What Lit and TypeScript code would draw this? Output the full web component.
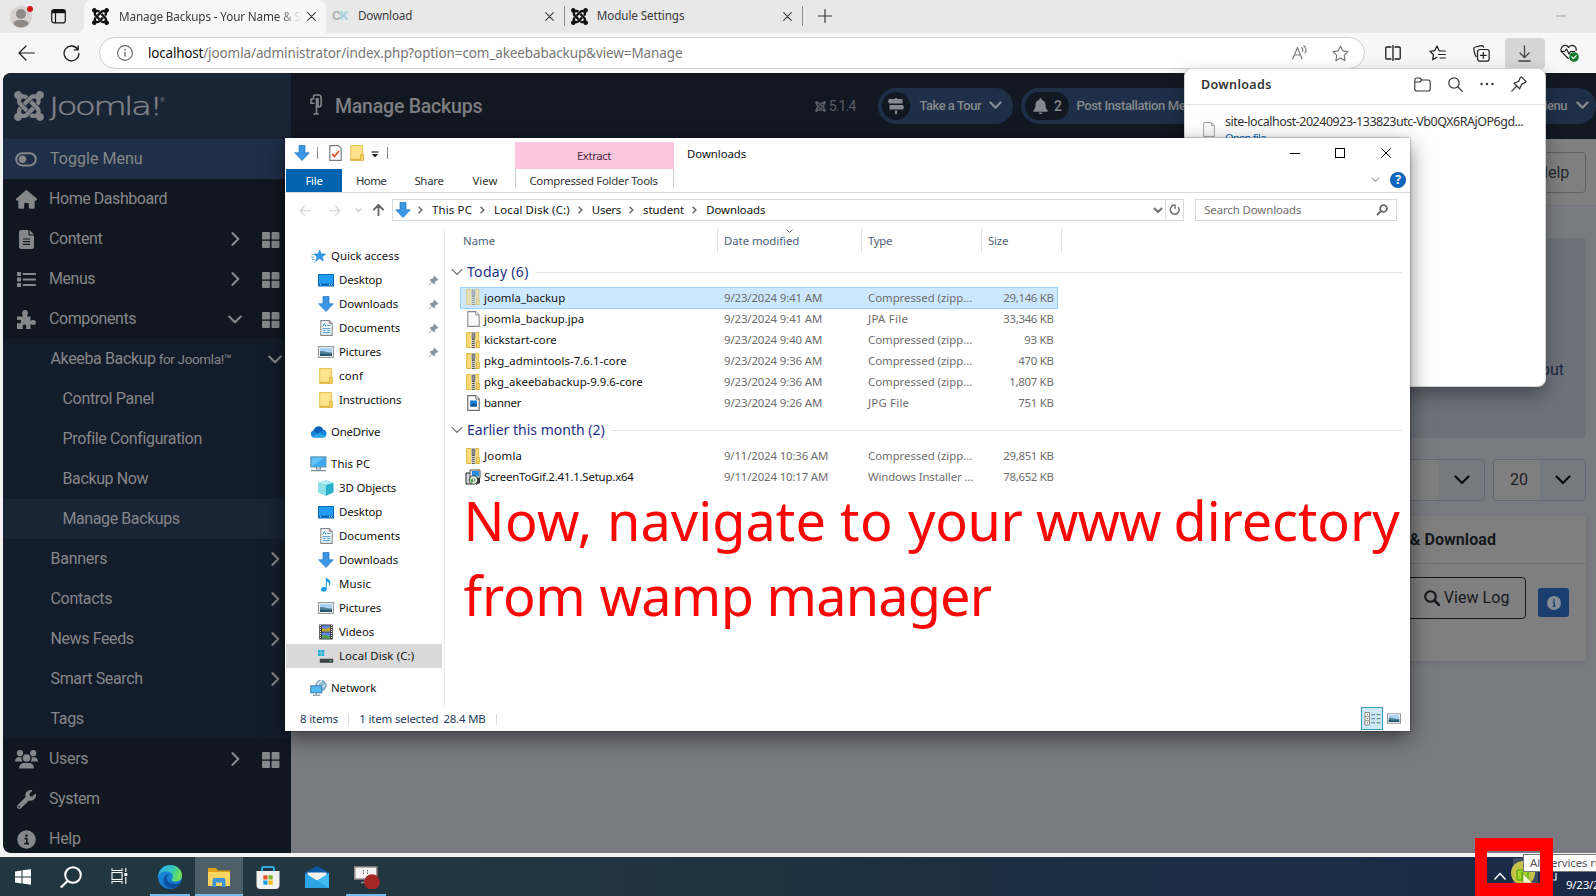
import { LitElement, html, svg, css, nothing } from "lit";
import { customElement, property } from "lit/decorators.js";

/* Text run whose letter spacing is tuned so that it fills a given width. */
@customElement("fit-text")
class FitText extends LitElement {
  @property() text = "";
  @property({ type: Number }) w = 0;
  static styles = css`
    :host { display: inline-block; white-space: pre; flex: none; }
  `;
  render() {
    return html`<span>${this.text}</span>`;
  }
  updated() {
    const span = this.renderRoot.querySelector("span") as HTMLElement;
    span.style.letterSpacing = "0px";
    const natural = span.getBoundingClientRect().width;
    if (this.w && natural) {
      span.style.letterSpacing = `${(this.w - 0.8 - natural) / this.text.length}px`;
    }
  }
}
const t = (text: string, w: number, cls = "") =>
  html`<fit-text class=${cls} .text=${text} .w=${w}></fit-text>`;

const icon = (w: number, h: number, vb: string, body: unknown, cls = "") =>
  html`<svg class="ic ${cls}" width=${w} height=${h} viewBox=${vb}>${body}</svg>`;

const line = (d: string, w = 1.2, color = "currentColor") =>
  svg`<path d=${d} fill="none" stroke=${color} stroke-width=${w} stroke-linecap="round" stroke-linejoin="round"/>`;

const joomlaPath = svg`<path fill="currentColor" d="M.6 92.1C.6 58.8 27.4 32 60.4 32c30 0 54.5 21.9 59.2 50.2 32.6-7.6 67.1.6 96.5 30l-44.3 44.3c-20.5-20.5-42.6-16.3-55.4-3.5-14.3 14.3-14.3 37.9 0 52.2l99.5 99.5-44 44.3c-87.7-87.2-49.7-49.7-99.8-99.7-26.8-26.5-35-64.8-24.8-98.9C20.4 144.6.6 120.7.6 92.1zm129.5 116.4l44.3 44.3c10-10 89.7-89.7 99.7-99.8 14.3-14.3 37.6-14.3 51.9 0 12.8 12.8 17 35-3.5 55.4l44 44.3c31.2-31.2 38.5-67.6 28.9-101.2 29.2-4.1 51.9-29.2 51.9-59.5 0-33.2-26.8-60.1-59.8-60.1-30.3 0-55.4 22.5-59.5 51.6-33.8-9.9-71.7-1.5-98.3 25.1-18.3 19.1-71.1 71.5-99.6 99.9zm266.3 152.2c8.2-32.7-.9-68.5-26.3-93.9-11.8-12.2 5 4.7-99.5-99.7l-44.3 44.3 99.7 99.7c14.3 14.3 14.3 37.6 0 51.9-12.8 12.8-35 17-55.4-3.5l-44 44.3c27.6 30.2 68 38.8 102.7 28 5.5 27.4 29.7 48.1 58.9 48.1 33 0 59.8-26.8 59.8-60.1 0-30.2-22.5-55-51.6-59.1zm-84.3-53.1l-44-44.3c-87 86.4-50.4 50.4-99.7 99.8-14.3 14.3-37.6 14.3-51.9 0-13.1-13.4-16.9-35.3 3.2-55.4l-44-44.3c-30.2 30.2-38 65.2-29.5 98.3-26.7 6-46.2 29.9-46.2 58.2C0 453.2 26.8 480 59.8 480c28.6 0 52.5-19.8 58.6-46.7 32.7 8.2 68.5-.6 94.2-26 32.1-32 12.2-12.4 99.5-99.7z"/>`;
const joomla = (s: number) => icon(s, s, "0 32 448 448", joomlaPath);

const chevRight = icon(9, 14, "0 0 9 14", line("M1.5 1.2L7.3 7L1.5 12.8", 2.1));
const chevDown = icon(14, 9, "0 0 14 9", line("M1.2 1.5L7 7.3L12.8 1.5", 2.1));
const tiles = icon(18, 18, "0 0 18 18", svg`<g fill="currentColor"><rect x="0" y="2" width="8" height="7.4" rx="1"/><rect x="9.5" y="2" width="8" height="7.4" rx="1"/><rect x="0" y="10.8" width="8" height="7.2" rx="1"/><rect x="9.5" y="10.8" width="8" height="7.2" rx="1"/></g>`);

/* ---------- file explorer icons ---------- */
const blueArrow = (s = 16) => icon(s, s, "0 0 16 16", svg`<path d="M5 .5h6v7.3h4.3L8 15.6.7 7.8H5z" fill="#3b97e3" stroke="#1f74bf" stroke-width=".7"/>`);
const folder = icon(14, 16, "0 0 14 16", svg`<path d="M.7.5h12v13.8h-12z" fill="#ffe38b" stroke="#e8c35a"/><path d="M10.5 9.5h2.9v6H.8v-1h9.7z" fill="#f7d46b" stroke="#d9ad3a" stroke-width=".8"/>`);
const zip = (cls = "") => icon(14, 16, "0 0 14 16", svg`<path d="M.7.5h12v15h-12z" fill="#fbdc78" stroke="#e2b83e"/><path d="M10.5 9.5h2.9v6h-3z" fill="#f7d46b" stroke="#d9ad3a" stroke-width=".8"/><path d="M5.2 0h4.4v16H5.2z" fill="#d6d3c8"/><path d="M6.2 1.2h2.5v5.2H6.2z" fill="#9a9a98" stroke="#555" stroke-width=".7"/><path d="M7.4 7v9" stroke="#55534a" stroke-width="2.6" stroke-dasharray="1 1"/>`, cls);
const blank = icon(13, 16, "0 0 13 16", svg`<path d="M.8.6h8l3.4 3.4v11.4H.8z" fill="#f9f9fb" stroke="#8b8b8b" stroke-width="1.1"/><path d="M8.8.6V4h3.4" fill="#fff" stroke="#8b8b8b" stroke-width="1"/>`);
const jpg = icon(13, 16, "0 0 13 16", svg`<path d="M.8.6h8l3.4 3.4v11.4H.8z" fill="#fff" stroke="#6d6d6d" stroke-width="1.2"/><path d="M8.8.6V4h3.4" fill="#fff" stroke="#6d6d6d"/><rect x="3" y="5.5" width="7" height="6" fill="#1c7dd6"/><path d="M3 11.5l3-3.4 2 1.6 2-1v2.8z" fill="#0d4d92"/>`);
const msi = icon(16, 16, "0 0 16 16", svg`<path d="M1 4h6v11H1z" fill="#d5d8dc" stroke="#222"/><path d="M5 1h10v8H5z" fill="#e4e4e4" stroke="#555"/><rect x="7" y="2" width="7" height="5.5" fill="#2a8be0"/><path d="M12 9h3v5l-4 2z" fill="#333"/><circle cx="8.5" cy="11" r="4.3" fill="#cfe9cf" stroke="#333" stroke-width=".9"/><path d="M5 10l3.3 1L7 15z" fill="#39ac4b"/><circle cx="8.5" cy="11" r="1.2" fill="#fff" stroke="#444" stroke-width=".6"/>`);
const monitor = icon(16, 13, "0 0 16 13", svg`<rect x=".5" y=".5" width="15" height="11.5" fill="#1f9df5" stroke="#0b6cbc"/><path d="M1 10.5h14" stroke="#0b5fa8" stroke-width="1.6"/><path d="M2 10.6h2M11 10.6h3" stroke="#cdeaff" stroke-width=".8" stroke-dasharray="1 1"/>`);
const docs = icon(13, 16, "0 0 13 16", svg`<path d="M.8.6h8.4l3 3v11.8H.8z" fill="#fff" stroke="#87898c" stroke-width="1.1"/><path d="M9.2.6v3h3" fill="none" stroke="#87898c"/><path d="M2.6 6.7L4.4 3.4 6 6.7M6.8 5.5h3.6M2.5 8.7h8M2.5 10.7h3.2M2.5 12.7h8M7 10.7h3.5" stroke="#3e93c8" stroke-width="1" fill="none"/>`);
const picture = (w = 16, h = 12) => icon(w, h, "0 0 16 12", svg`<rect x=".6" y=".6" width="14.8" height="10.8" fill="#fff" stroke="#909498" stroke-width="1.1"/><rect x="2" y="2" width="12" height="8" fill="#a9d3f5"/><path d="M2 5.5c3-1.4 6 1.6 12 1v3.500H2z" fill="#4a7f93"/><path d="M2 7.6c3 .4 5 1.2 12 .3V10H2z" fill="#23506a"/>`);
const star = icon(15, 15, "0 0 15 15", svg`<path d="M8.700 1l1.300 3.900 4.600.1-3.400 2.700 1.100 4.300-3.700-2.400L4.800 12l1.200-4.300L3 5.100l4.200-.2z" fill="#2a9be6" stroke="#1a7cc4" stroke-width=".6"/><path d="M.5 5.500h2M.2 8h3M1 10.500h2.500M3 13.500l2-1" stroke="#55b4ee" stroke-width="1"/>`);
const cloud = icon(17, 12, "0 0 17 12", svg`<path d="M4 11.500a3.600 3.600 0 0 1-.6-7C4.500 1.700 6.500.4 8.600.5c2.200 0 3.700 1.200 4.400 3 2.200.2 3.500 1.800 3.500 4S15 11.500 13 11.500z" fill="#1484d8"/><path d="M3.400 4.500C4.500 1.700 6.500.4 8.600.5c2.200 0 3.700 1.200 4.400 3L8 8z" fill="#0a5fb5"/><path d="M2 10.500L9 7l7 3.200c-.7.900-1.700 1.300-3 1.300H4c-.8 0-1.500-.4-2-1z" fill="#28a8ea"/>`);
const pc = icon(17, 16, "0 0 17 16", svg`<rect x=".9" y=".9" width="15" height="10" fill="#62c1f8" stroke="#4a84a8"/><path d="M1.400 10.400L15.400 1.400v9z" fill="#3ba7ec"/><path d="M6.500 11v2h4v-2M1 14.700h15" stroke="#7a8b98" stroke-width="1.200" fill="none"/>`);
const cube = icon(16, 16, "0 0 16 16", svg`<path d="M8 .3l7.500 2.500v9.800L8 15.700.5 12.600V2.800z" fill="#27b1cb"/><path d="M8 5v10.700L.5 12.600V2.800z" fill="#8de0ea"/><path d="M8 .3l7.500 2.500L8 5 .5 2.800z" fill="#b6f0f4"/>`);
const music = icon(16, 16, "0 0 16 16", svg`<path d="M7.800.3c.4 2.700 4.600 3 4.600 6.400 0 1.400-.7 2.300-1.400 2.900.4-2.200-.7-3.600-2.200-4v7.400c0 1.600-1.400 2.700-3 2.700S3 14.800 3 13.500s1.300-2.500 2.900-2.500c.7 0 1.300.1 1.900.5z" fill="#1b9de8"/>`);
const video = icon(14, 16, "0 0 14 16", svg`<rect x=".2" y=".5" width="13.600" height="15" fill="#3a3a3c"/><path d="M1.500 1v14M12.500 1v14" stroke="#fff" stroke-width="1.100" stroke-dasharray="1 1"/><rect x="3" y="1.500" width="8" height="6" fill="#5e86e8"/><path d="M3 4l4 1 4-2v4.500H3z" fill="#c2a32c"/><rect x="3" y="8.500" width="8" height="6" fill="#5e86e8"/><path d="M3 12l4-1 4 2v1.500H3z" fill="#4fa03a"/>`);
const disk = icon(16, 13, "0 0 16 13", svg`<path d="M0 0h2.800v2.700H0zM3.400 0h2.800v2.700H3.400zM0 3.300h2.800V6H0zM3.400 3.300h2.800V6H3.400z" fill="#1eb0dc"/><path d="M4 7h9l2 2H2z" fill="#d2d4d6"/><rect x="1.800" y="8.800" width="13.400" height="4" fill="#3d4245"/><rect x="11.500" y="10.200" width="1.800" height="1.200" fill="#46e05a"/>`);
const network = icon(17, 16, "0 0 17 16", svg`<circle cx="11" cy="5.500" r="5.200" fill="#93bdd4" stroke="#668ca4" stroke-width=".8"/><path d="M7 4c2 .4 3-3 5-3.500M9 6c2 0 4 2 6-1" stroke="#f0f8fc" stroke-width="1.200" fill="none"/><rect x=".8" y="5.800" width="11" height="7" fill="#55bbf5" stroke="#3d7ea8"/><path d="M3 15.300h7M6.300 13v2" stroke="#7a8b98" stroke-width="1.100"/>`);
const pin = icon(11, 11, "0 0 11 11", svg`<path d="M6.300.6l4.100 4.100-1 .8-.6-.1L6.900 7.200c.2 1 0 1.700-.7 2.300L4 7.400.8 10.400.5 10.100 3.600 7 1.500 4.800c.6-.7 1.400-.9 2.300-.7l1.900-1.900-.1-.7z" fill="#8a949c"/>`);

const navItems: Array<[unknown, string, number, string]> = [
  [star, "Quick access", 69, "root"],
  [monitor, "Desktop", 44, "pin"],
  [blueArrow(), "Downloads", 60, "pin"],
  [docs, "Documents", 62, "pin"],
  [picture(), "Pictures", 43, "pin"],
  [folder, "conf", 25, ""],
  [folder, "Instructions", 63, ""],
  [cloud, "OneDrive", 50, "root gap"],
  [pc, "This PC", 40, "root gap"],
  [cube, "3D Objects", 58, ""],
  [monitor, "Desktop", 44, ""],
  [docs, "Documents", 62, ""],
  [blueArrow(), "Downloads", 60, ""],
  [music, "Music", 33, ""],
  [picture(), "Pictures", 43, ""],
  [video, "Videos", 36, ""],
  [disk, "Local Disk (C:)", 76, "sel"],
  [network, "Network", 46, "root gap"],
];

type Row = [unknown, string, number, string, number, string, number, string, number];
const cz = "Compressed (zipp...";
const today: Row[] = [
  [zip("faded"), "joomla_backup", 82, "9/23/2024 9:41 AM", 99, cz, 105, "29,146 KB", 51],
  [blank, "joomla_backup.jpa", 101, "9/23/2024 9:41 AM", 99, "JPA File", 41, "33,346 KB", 51],
  [zip(), "kickstart-core", 73.5, "9/23/2024 9:40 AM", 99, cz, 105, "93 KB", 30],
  [zip(), "pkg_admintools-7.6.1-core", 143.5, "9/23/2024 9:36 AM", 99, cz, 105, "470 KB", 36],
  [zip(), "pkg_akeebabackup-9.9.6-core", 159.5, "9/23/2024 9:36 AM", 99, cz, 105, "1,807 KB", 45],
  [jpg, "banner", 38, "9/23/2024 9:26 AM", 99, "JPG File", 42, "751 KB", 36],
];
const earlier: Row[] = [
  [zip(), "Joomla", 39, "9/11/2024 10:36 AM", 105, cz, 105, "29,851 KB", 51],
  [msi, "ScreenToGif.2.41.1.Setup.x64", 150.5, "9/11/2024 10:17 AM", 105, "Windows Installer ...", 106, "78,652 KB", 51],
];

@customElement("explorer-window")
class ExplorerWindow extends LitElement {
  static styles = css`
    :host {
      display: flex; flex-direction: column; box-sizing: border-box; width: 1125px; height: 593px;
      background: #fff; font: 11.4px/16px "Noto Sans", sans-serif; color: #111;
      box-shadow: 0 7px 20px rgba(0, 0, 0, 0.5), 0 0 2px rgba(0, 0, 0, 0.5);
    }
    .ic { flex: none; display: block; }
    .top { display: flex; height: 31px; flex: none; }
    .qat { display: flex; width: 230px; align-items: center; box-sizing: border-box; padding: 0 0 1px 9px; }
    .bar { width: 1px; height: 12px; background: #8d8d8d; }
    .b1 { margin: 0 11px 0 7px; }
    .q1 { margin-left: 8px; }
    .q2 { margin: 2px 8px 0 7px; }
    .extract { width: 159px; margin-top: 4px; background: #fdc6df; display: flex; align-items: center; justify-content: center; color: #4b2a3b; box-sizing: border-box; padding-right: 1px; }
    .title { padding: 8px 0 0 13px; }
    .wbtns { margin-left: auto; display: flex; padding: 10px 19px 0 0; gap: 35px; color: #000; }
    .wbtns .x { margin-left: 1px; }
    .tabs { display: flex; height: 24px; flex: none; border-bottom: 1px solid #d9dadb; box-sizing: border-box; color: #333; align-items: center; }
    .file { width: 56px; height: 23px; margin-left: 1px; background: #0063b1; color: #fff; display: flex; align-items: center; justify-content: center; }
    .tab { width: 44px; text-align: center; }
    .home { margin-left: 7px; }
    .share { margin-left: 14px; }
    .view { margin-left: 12px; }
    .cft { box-sizing: border-box; width: 159px; height: 23px; margin-left: 8px; display: flex; align-items: center; justify-content: center; padding-right: 2px; border: solid; border-width: 0 1px; border-image: linear-gradient(#ccc 70%, #fff 90%) 1; }
    .help { margin-left: auto; display: flex; align-items: center; gap: 10px; padding: 0 4px 1px 0; color: #a8a8a8; }
    .addr { display: flex; height: 22px; padding: 6px 13px 0 14px; flex: none; }
    .arrows { width: 93px; display: flex; align-items: center; box-sizing: border-box; }
    .fw { margin: 0 14px 0 18px; }
    .up { margin-left: 11px; }
    .box { box-sizing: border-box; height: 22px; border: 1px solid #d9d9d9; display: flex; align-items: center; }
    .crumbs { width: 793px; padding-left: 2px; }
    .crumbs .sep { margin: 0 9px 0 8px; color: #666; }
    .crumbs .first { margin-left: -1px; }
    .search { width: 202px; margin-left: 11px; padding: 0 8px; justify-content: space-between; color: #6d6d6d; }
    .rf { margin-left: auto; display: flex; align-items: center; color: #707070; height: 20px; padding-right: 2px; }
    .rf i { width: 1px; height: 20px; background: #d9d9d9; margin: 0 3px 0 2px; }
    .body { display: flex; flex: 1; padding-top: 7px; min-height: 0; }
    .nav { width: 159px; padding-top: 16px; border-right: 1px solid #ececec; box-sizing: content-box; }
    .n { display: flex; align-items: center; height: 24px; width: 156px; margin-left: 1px; box-sizing: border-box; padding-left: 32px; }
    .n .slot { width: 16px; margin-right: 5px; display: flex; justify-content: center; }
    .n.root { padding-left: 24px; }
    .n.gap { margin-top: 8px; }
    .n.sel { background: #d9d9d9; }
    .n .pin { margin-left: auto; margin-right: 3px; }
    .list { flex: 1; }
    .cols, .r { display: grid; grid-template-columns: 257px 144px 120px 80px; }
    .cols { color: #4c607a; height: 25px; padding-left: 16px; }
    .cols div { border-right: 1px solid #e2e2e2; box-sizing: border-box; padding: 5px 0 0 6px; }
    .cols div:first-child { padding-left: 2px; }
    .cols .dm { display: grid; grid-template-areas: "a"; }
    .dm > * { grid-area: a; }
    .dm .ic { margin: -4px 0 0 62px; color: #777; }
    .g { display: flex; align-items: center; height: 22px; font-size: 14px; line-height: 20px; color: #1e3287; padding-left: 6px; margin-right: 8px; margin-top: 6px; }
    .g.g1 { margin-top: 8px; }
    .g .ic { margin-right: 4px; color: #666; }
    .g i { flex: 1; height: 1px; background: #e2e2e2; margin-left: 7px; }
    .rows { padding: 4px 0 0 15px; }
    .r { height: 21px; width: 598px; box-sizing: border-box; align-items: center; color: #6d6d6d; padding-left: 6px; grid-template-columns: 258px 144px 120px 1fr; line-height: 17px; }
    .r.on { background: #cce8ff; box-shadow: inset 0 0 0 1px #99d1ff; height: 22px; margin-bottom: -1px; padding-bottom: 2px; }
    .r .nm { display: flex; align-items: center; color: #111; }
    .nm .slot { width: 14px; margin-right: 4px; display: flex; justify-content: center; }
    .r .sz { text-align: right; padding-right: 4.5px; }
    .faded { opacity: 0.55; }
    .status { display: flex; height: 24px; flex: none; align-items: center; color: #1e395b; padding-left: 15px; }
    .status i { width: 1px; height: 11px; background: #ddd; margin: 0 10px; }
    .status b { width: 5px; }
    .views { margin-left: auto; display: flex; align-items: center; gap: 4px; padding: 0 9px 1px 0; }
    .v { width: 20px; height: 21px; border: 1px solid #3d9cbd; background: #cde8f6; display: flex; align-items: center; justify-content: center; }
  `;
  row(r: Row, i: number, on: boolean) {
    return html`<div class="r ${on && i === 0 ? "on" : ""}">
      <div class="nm"><span class="slot">${r[0]}</span>${t(r[1], r[2])}</div>
      <div>${t(r[3], r[4])}</div><div>${t(r[5], r[6])}</div><div class="sz">${t(r[7], r[8])}</div>
    </div>`;
  }
  render() {
    const sep = icon(5, 8, "0 0 5 8", line("M1 1.2L3.9 4L1 6.8", 1.5), "sep");
    const gchev = icon(12, 8, "0 0 12 8", line("M1 1.3L6 6.3L11 1.3", 1.1));
    return html`
      <div class="top">
        <div class="qat">
          ${blueArrow()}
          <span class="bar b1"></span>
          ${icon(13, 16, "0 0 13 16", svg`<path d="M.8.6h8.400l3 3v11.800H.8z" fill="#fff" stroke="#7d7d7d" stroke-width="1.200"/><path d="M3 9l2.500 2.500L10 6" fill="none" stroke="#e0532b" stroke-width="1.800"/>`)}
          <span class="q1">${folder}</span>
          <span class="q2">${icon(8, 7, "0 0 8 7", svg`<path d="M.5 1h7" stroke="#222" stroke-width="1.200"/><path d="M.8 3h6.400L4 6.500z" fill="#222"/>`)}</span>
          <span class="bar"></span>
        </div>
        <div class="extract">${t("Extract", 35)}</div>
        <div class="title">${t("Downloads", 60)}</div>
        <div class="wbtns">
          ${icon(10, 10, "0 0 10 10", svg`<path d="M0 5.500h10" stroke="currentColor"/>`)}
          ${icon(10, 10, "0 0 10 10", svg`<rect x=".5" y=".5" width="9" height="9" fill="none" stroke="currentColor"/>`)}
          ${icon(10, 10, "0 0 10 10", svg`<path d="M.3.3l9.400 9.400M9.700.3L.3 9.700" stroke="currentColor"/>`, "x")}
        </div>
      </div>
      <div class="tabs">
        <div class="file">${t("File", 18)}</div>
        <div class="tab home">${t("Home", 31)}</div>
        <div class="tab share">${t("Share", 30)}</div>
        <div class="tab view">${t("View", 26)}</div>
        <div class="cft">${t("Compressed Folder Tools", 129)}</div>
        <div class="help">
          ${icon(9, 6, "0 0 9 6", line("M1 1L4.5 4.5L8 1", 1.1))}
          ${icon(16, 16, "0 0 16 16", svg`<circle cx="8" cy="8" r="7.700" fill="#0b66c0" stroke="#084f98" stroke-width=".6"/><text x="8" y="12.300" text-anchor="middle" font-size="12" font-weight="700" fill="#fff">?</text>`)}
        </div>
      </div>
      <div class="addr">
        <div class="arrows">
          ${icon(12, 11, "0 0 12 11", line("M11.3 5.5H1M5.5 1L1 5.5L5.5 10", 1.3, "#d8d8d8"))}
          <span class="fw">${icon(12, 11, "0 0 12 11", line("M.7 5.5H11M6.5 1L11 5.5L6.5 10", 1.3, "#d8d8d8"))}</span>
          ${icon(7, 5, "0 0 7 5", line("M1 1L3.5 3.5L6 1", 1.2, "#c8c8c8"))}
          <span class="up">${icon(11, 12, "0 0 11 12", line("M5.5 11.4V1.2M1 5.5L5.5 1L10 5.5", 1.8, "#666"))}</span>
        </div>
        <div class="box crumbs">
          ${blueArrow()}<span class="first">${sep}</span>
          ${t("This PC", 41)}${sep}${t("Local Disk (C:)", 76.5)}${sep}
          ${t("Users", 30)}${sep}${t("student", 42)}${sep}${t("Downloads", 60)}
          <div class="rf">
            ${icon(10, 7, "0 0 10 7", line("M1.5 1.5L5 5L8.5 1.5", 2))}<i></i>
            ${icon(12, 12, "0 0 12 12", svg`${line("M3.2 2.2A4.4 4.4 0 1 0 9.6 3.6", 1.6)}<path d="M2.500 1.200h3.600v3.800" fill="none" stroke="currentColor" stroke-width="1.400"/>`)}
          </div>
        </div>
        <div class="box search">${t("Search Downloads", 98)}
          ${icon(12, 12, "0 0 12 12", svg`<circle cx="7.500" cy="4.500" r="3.400" fill="none" stroke="#666" stroke-width="1.700"/><path d="M5 7L1 11" stroke="#666" stroke-width="2"/>`)}
        </div>
      </div>
      <div class="body">
        <div class="nav">
          ${navItems.map(([ic, label, w, c]) => html`<div class="n ${c === "pin" ? "" : c}"><span class="slot">${ic}</span>${t(label, w)}${c === "pin" ? html`<span class="pin">${pin}</span>` : nothing}</div>`)}
        </div>
        <div class="list">
          <div class="cols">
            <div>${t("Name", 33)}</div>
            <div class="dm">${t("Date modified", 76)}${icon(7, 5, "0 0 7 5", line("M.8.8L3.5 3.5L6.2.8", 1))}</div>
            <div>${t("Type", 25)}</div><div>${t("Size", 21)}</div>
          </div>
          <div class="g g1">${gchev}${t("Today (6)", 62.5)}<i></i></div>
          <div class="rows">${today.map((r, i) => this.row(r, i, true))}</div>
          <div class="g">${gchev}${t("Earlier this month (2)", 138.5)}<i></i></div>
          <div class="rows">${earlier.map((r, i) => this.row(r, i, false))}</div>
        </div>
      </div>
      <div class="status">
        ${t("8 items", 39)}<i></i>${t("1 item selected", 80)}<b></b>${t("28.4 MB", 43)}<i></i>
        <div class="views">
          <div class="v">${icon(17, 14, "0 0 17 14", svg`<path d="M1 .5h4.500v12.500H1zM1 4.700h4.500M1 8.800h4.500" fill="#fff" stroke="#8b8b8b"/><path d="M3 2.700h.8M3 6.700h.8M3 10.800h.8" stroke="#333"/><path d="M7.300 2.700h3.700M12.500 2.700h4M7.300 6.700h3.700M12.500 6.700h4M7.300 10.800h3.700M12.500 10.800h4" stroke="#5b7485"/>`)}</div>
          ${picture(14, 11)}
        </div>
      </div>`;
  }
}

@customElement("browser-chrome")
class BrowserChrome extends LitElement {
  static styles = css`
    :host { display: block; background: #f7f7f7; height: 73px; font: 12px/16px "Noto Sans", sans-serif; color: #3b3b3b; }
    .ic { flex: none; display: block; }
    .strip { display: flex; height: 33px; background: #e8e8e8; align-items: center; font-size: 11.7px; }
    .strip fit-text { margin-top: -2px; }
    .lead { width: 84px; height: 33px; background: #e8e8e8; border-bottom-right-radius: 8px; display: flex; align-items: center; box-sizing: border-box; padding: 0 0 1px 9px; gap: 17px; }
    .act { display: flex; width: 242px; height: 33px; background: #f7f7f7; border-radius: 8px 8px 0 0; align-items: center; padding: 0 0 1px 8px; box-sizing: border-box; }
    .wrap { background: linear-gradient(#e8e8e8 50%, #f7f7f7 50%); display: flex; }
    .rest { background: #e8e8e8; border-bottom-left-radius: 8px; flex: 1; height: 33px; display: flex; align-items: center; box-sizing: border-box; padding-bottom: 1px; }
    .tt { width: 188px; height: 17px; margin-left: 10px; overflow: hidden; -webkit-mask-image: linear-gradient(90deg, #000 158px, transparent 182px); }
    .strip .tt fit-text { margin-top: -1px; }
    .dark { color: #111; }
    .ck { width: 16px; margin: 0 10px 0 6px; font: 700 12px/16px "Inter", sans-serif; color: #a9adad; letter-spacing: -1.5px; }
    .ck b { color: #a6d7d9; }
    .s { width: 1px; height: 20px; background: #8d8d8d; }
    .x1 { margin: 0 10px 0 133px; }
    .j2 { margin: 0 9px 0 5.5px; color: #111; }
    .x2 { margin: 0 10px 0 98.5px; }
    .plus { margin-left: 15px; }
    .min { margin-left: 724.5px; }
    .bar { display: flex; height: 40px; align-items: center; color: #1b1b1b; padding-left: 18px; }
    .reload { margin-left: 28px; }
    .pill { display: flex; box-sizing: border-box; width: 1266px; height: 32px; margin: 0 0 0 19px; border: 1px solid #cfcfcf; border-radius: 16px; background: #fff; align-items: center; padding: 0 15px 0 17px; color: #767676; font-size: 13.5px; }
    .pill b { font-weight: 400; color: #111; margin-left: 15px; }
    .aa { margin-left: auto; }
    .st { margin-left: 24px; }
    .tools { display: flex; align-items: center; padding-left: 19.5px; }
    .m1 { margin-left: 28px; }
    .m2 { margin-left: 27px; }
    .dl { width: 40px; height: 31px; margin-left: 15px; background: #d6d6d6; border-radius: 4px; display: flex; align-items: center; justify-content: center; color: #444; }
    .m3 { margin-left: 15.5px; }
  `;
  render() {
    const x = icon(9, 9, "0 0 9 9", line("M.7.7l7.6 7.6M8.3.7L.7 8.3", 1.1));
    return html`
      <div class="strip">
        <div class="wrap">
          <div class="lead">
            ${icon(25, 27, "0 0 25 27", svg`<circle cx="12" cy="14" r="11" fill="#d5d1ce"/><circle cx="12" cy="11" r="5" fill="#8f8a86"/><path d="M4.500 21c0-3 3-4 7.500-4s7.500 1 7.500 4c-4 4.500-11 4.500-15 0z" fill="#8f8a86"/><circle cx="21" cy="6" r="3" fill="#d41414"/>`)}
            ${icon(15, 15, "0 0 15 15", svg`<rect x=".7" y=".7" width="13.600" height="13.200" rx="2.500" fill="none" stroke="#111" stroke-width="1.200"/><path d="M.7 1h13.600v3.200H.7z" fill="#111"/><path d="M4.500 4v10" stroke="#111" stroke-width="1.200"/>`)}
          </div>
          <div class="act"><span class="dark">${joomla(17)}</span><div class="tt">${t("Manage Backups - Your Name & Site", 196)}</div>${x}</div>
        </div>
        <div class="rest">
          <span class="ck">C<b>K</b></span>${t("Download", 55)}
          <span class="x1">${x}</span><i class="s"></i>
          <span class="j2">${joomla(17)}</span>${t("Module Settings", 88.5)}
          <span class="x2">${x}</span><i class="s"></i>
          <span class="plus">${icon(14, 14, "0 0 14 14", line("M7 .5v13M.5 7h13", 1.2))}</span>
          <span class="min">${icon(10, 2, "0 0 10 2", svg`<path d="M0 1h10" stroke="#999"/>`)}</span>
        </div>
      </div>
      <div class="bar">
        ${icon(17, 16, "0 0 17 16", line("M16.3 8H1M8 1L1 8l7 7", 1.2))}
        <span class="reload">${icon(17, 17, "0 0 17 17", line("M14.8 4.5A7.4 7.4 0 1 0 15.9 8.5M15.2.8v4h-4", 1.3))}</span>
        <div class="pill">
          ${icon(16, 16, "0 0 16 16", svg`<circle cx="8" cy="8" r="7.400" fill="none" stroke="#666" stroke-width="1.100"/><path d="M8 6.800v5" stroke="#666" stroke-width="1.300"/><circle cx="8" cy="4.600" r=".9" fill="#666"/>`)}
          <b>${t("localhost", 56)}</b>${t("/joomla/administrator/index.php?option=com_akeebabackup&view=Manage", 480)}
          <span class="aa">${icon(16, 16, "0 0 16 16", line("M.7 14L5.5 2.5L10 14M2.5 10h6M9.7 2.5c1.3 1.2 1.3 3 .6 4M11.8.8c2.5 2 2.6 5 1.2 7.2", 1.1))}</span>
          <span class="st">${icon(17, 17, "0 0 17 17", line("M8.5 1l2.3 4.9 5.2.7-3.8 3.7.9 5.4-4.6-2.6-4.6 2.6.9-5.4L1 6.6l5.2-.7z", 1.1))}</span>
        </div>
        <div class="tools">
          ${icon(16, 16, "0 0 16 16", line("M6 2H1.8Q.8 2 .8 3v10q0 1 1 1H6M10 2h4.2q1 0 1 1v10q0 1-1 1H10M8 .5v15", 1.3))}
          <span class="m1">${icon(17, 16, "0 0 17 16", line("M10 5.4L8 1 5.8 5.6 1 6.3l3.5 3.4L3.7 14.6 8 12.3M10.5 6h5.8M9.5 9.5h6.8M11 13h5.3", 1.2))}</span>
          <span class="m2">${icon(17, 17, "0 0 17 17", svg`${line("M3 11.5C1.7 10 .8 4 .8 3.5Q.8 2.2 2.2 2l6.6-1.3q1.5 0 1.8 1.5", 1.2)}<rect x="4.500" y="4.500" width="11.700" height="11.700" rx="2.500" fill="#f7f7f7" stroke="currentColor" stroke-width="1.200"/>${line("M10.3 7.3v6M7.3 10.3h6", 1.2)}`)}</span>
          <div class="dl">${icon(13, 17, "0 0 13 17", line("M6.5 1v11M2 8l4.5 4.5L11 8M.8 16h11.4", 1.3))}</div>
          <span class="m3">${icon(19, 18, "0 0 19 18", svg`${line("M8.3 14.5L2.3 8.6C-.5 5.5 2 1 5.5 1.4 7 1.6 8.3 3 8.5 3.5 9 2.5 10.5 1.2 12.3 1.3c2.7.2 4.5 2.6 3.7 5.2M1 7.5h3.5L6.5 5l2.5 5 1.5-2.5h4", 1.2)}<circle cx="14" cy="13" r="4.800" fill="#13762a"/>${line("M11.8 13l1.6 1.6 2.8-3", 1.2, "#fff")}`)}</span>
        </div>
      </div>`;
  }
}

const side = {
  toggle: icon(22, 15, "0 0 22 15", svg`<rect x="1.200" y="1.200" width="19.600" height="12.200" rx="6.100" fill="none" stroke="currentColor" stroke-width="2"/><circle cx="7.500" cy="7.300" r="3.700" fill="currentColor"/>`),
  home: icon(21, 19, "0 0 576 512", svg`<path fill="currentColor" d="M575.800 255.500c0 18-15 32.100-32 32.100h-32l.7 160.200c0 2.700-.2 5.400-.5 8.100V472c0 22.100-17.900 40-40 40H392c-22.100 0-40-17.900-40-40V384c0-17.700-14.300-32-32-32H256c-17.700 0-32 14.300-32 32v88c0 22.100-17.900 40-40 40H104c-22.100 0-40-17.900-40-40V287.600H32c-18 0-32-14-32-32.100c0-9 3-17 10-24L266.400 8c7-7 15-8 22-8s15 2 21 7L564.800 231.500c8 7 12 15 11 24z"/>`),
  file: icon(15, 19, "0 0 15 19", svg`<path d="M2 0h7.500v4.500q0 1 1 1H15V17q0 2-2 2H2q-2 0-2-2V2Q0 0 2 0zM10.600 0L15 4.400h-4.400z" fill="currentColor"/><path d="M4 9h7M4 11.700h7M4 14.400h7" stroke="#111721" stroke-width="1.200"/>`),
  list: icon(19, 15, "0 0 19 15", svg`<path d="M0 0h4v4H0zM0 5.500h4v4H0zM0 11h4v4H0z" fill="currentColor"/><path d="M6.500 2h11.500M6.500 7.500h11.500M6.500 13h11.500" stroke="currentColor" stroke-width="2.100" stroke-linecap="round"/>`),
  puzzle: icon(19, 19, "0 0 19 19", svg`<path d="M0 6.500h5.200q.8 0 .6-.8C5 4 5 2.800 5.500 1.800 6 .600 7 0 8 0s2.300.600 2.700 1.800c.4 1 .2 2-.5 3.600-.3.700 0 1.100.7 1.100H13.500V10q0 .9.800.6c1.500-.7 3-.6 3.700 0 .7.500 1 1.300 1 2s-.4 1.700-1.200 2.100c-.9.400-2 .3-3.500-.4-.6-.2-.8.100-.8.700v4H9.500q-.8 0-.6-.8c1-1.700.4-3.700-1.400-3.700S5 16.600 6 18.200q.2.800-.600.800H0v-5.500q0-.8.800-.5c1.500.9 3.400.2 3.400-1.500S2.400 9.200.9 10Q0 10.300 0 9.500z" fill="currentColor"/>`),
  users: icon(23, 19, "0 0 23 19", svg`<g fill="currentColor"><circle cx="5" cy="3.200" r="3.100"/><circle cx="18.200" cy="3.200" r="3.100"/><circle cx="11.600" cy="8" r="3.800"/><path d="M0 11.500C0 9 1.500 7.300 3.600 7.300h3L6.500 9q.1 1.500 1.200 2.600H0zM23 11.500c0-2.500-1.500-4.200-3.600-4.200h-2.800L16.700 9q-.1 1.500-1.300 2.600H23zM4.200 18.500c0-3.500 2-5.600 4.600-5.600h5.600c2.600 0 4.600 2.100 4.600 5.600z"/></g>`),
  wrench: icon(19, 19, "0 0 512 512", svg`<path fill="currentColor" d="M507.730 109.100c-2.240-9.030-13.540-12.090-20.120-5.510l-74.360 74.360-67.880-11.310-11.310-67.880 74.360-74.360c6.620-6.620 3.430-17.900-5.660-20.160-47.380-11.740-99.550.91-136.580 37.930-39.640 39.640-50.550 97.100-34.050 147.200L18.740 402.760c-24.990 24.990-24.990 65.510 0 90.500 24.990 24.990 65.510 24.990 90.500 0l213.210-213.210c50.120 16.710 107.470 5.680 147.370-34.220 37.070-37.070 49.700-89.320 37.910-136.730zM64 472c-13.250 0-24-10.750-24-24 0-13.260 10.750-24 24-24s24 10.740 24 24c0 13.250-10.750 24-24 24z"/>`),
  info: icon(19, 19, "0 0 19 19", svg`<circle cx="9.500" cy="9.500" r="9.300" fill="currentColor"/><circle cx="9.500" cy="5.500" r="1.300" fill="#111721"/><path d="M7.500 8.500h2.300v5M7.200 13.600h4.800" fill="none" stroke="#111721" stroke-width="1.600"/>`),
};

@customElement("joomla-sidebar")
class JoomlaSidebar extends LitElement {
  static styles = css`
    :host { display: block; width: 288px; height: 780px; overflow: hidden; background: #111721; color: #85878a; font: 400 16px/40px "Roboto", sans-serif; flex: none; }
    .ic { display: block; flex: none; }
    .brand { height: 66px; background: #192434; display: flex; align-items: center; padding-left: 11px; gap: 5px; box-sizing: border-box; color: #808387; }
    .row { display: flex; height: 40px; align-items: center; padding: 0 11px 0 0; box-sizing: border-box; }
    .slot { width: 23px; margin: 0 11.5px 0 11.5px; display: flex; justify-content: center; }
    .toggle { background: #1f2f47; }
    .toggle fit-text { margin-left: 1px; }
    .row .end { margin-left: auto; display: flex; align-items: center; }
    .end .cv { width: 34px; display: flex; justify-content: center; margin-right: 10px; }
    .sub { background: #131d2a; }
    .sub .row { padding-left: 47.5px; }
    .sub .first { padding-right: 9px; }
    .sub .deep { padding-left: 59.5px; }
    .sub .on { background: #192434; }
    .small { font-size: 13.5px; margin-left: 3px; }
  `;
  main(ic: unknown, label: string, w: number, chev: unknown = nothing) {
    return html`<div class="row"><span class="slot">${ic}</span>${t(label, w)}
      ${chev === nothing ? nothing : html`<span class="end"><span class="cv">${chev}</span>${tiles}</span>`}</div>`;
  }
  render() {
    return html`
      <div class="brand">
        ${joomla(30)}
        ${icon(118, 30, "0 0 118 30", svg`<text transform="translate(0 24) scale(1.42 1)" x="0" y="0" font-family="DejaVu Sans" font-weight="200" font-size="24" letter-spacing="-1.900" textLength="78.500" lengthAdjust="spacingAndGlyphs" fill="currentColor" stroke="currentColor" stroke-width=".4">Joomla!</text><text x="111" y="11" font-family="Roboto" font-size="6" fill="currentColor">®</text>`)}
      </div>
      <div class="row toggle"><span class="slot">${side.toggle}</span>${t("Toggle Menu", 93.5)}</div>
      ${this.main(side.home, "Home Dashboard", 119)}
      ${this.main(side.file, "Content", 54, chevRight)}
      ${this.main(side.list, "Menus", 47, chevRight)}
      ${this.main(side.puzzle, "Components", 88, chevDown)}
      <div class="sub">
        <div class="row first">${t("Akeeba Backup", 106)}<span class="small">${t("for Joomla!™", 74)}</span><span class="end">${chevDown}</span></div>
        <div class="row deep">${t("Control Panel", 92.5)}</div>
        <div class="row deep">${t("Profile Configuration", 139)}</div>
        <div class="row deep">${t("Backup Now", 86.5)}</div>
        <div class="row deep on">${t("Manage Backups", 118)}</div>
        <div class="row">${t("Banners", 57.5)}<span class="end">${chevRight}</span></div>
        <div class="row">${t("Contacts", 62.5)}<span class="end">${chevRight}</span></div>
        <div class="row">${t("News Feeds", 84)}<span class="end">${chevRight}</span></div>
        <div class="row">${t("Smart Search", 93)}<span class="end">${chevRight}</span></div>
        <div class="row">${t("Tags", 34)}</div>
      </div>
      ${this.main(side.users, "Users", 40, chevRight)}
      ${this.main(side.wrench, "System", 51.5)}
      ${this.main(side.info, "Help", 32.5)}`;
  }
}

@customElement("joomla-main")
class JoomlaMain extends LitElement {
  static styles = css`
    :host { display: flex; flex-direction: column; flex: 1; min-width: 0; background: #7a7b80; font: 400 16px/20px "Roboto", sans-serif; color: #16191d; }
    .ic { display: block; flex: none; }
    .head { height: 66px; flex: none; background: #121822; display: flex; align-items: center; padding-left: 19px; color: #828487; }
    .mark { margin-bottom: 4px; }
    .head h1 { font: 500 19.5px/24px "Roboto", sans-serif; margin: 2px 0 0 13px; color: #7c7e81; }
    .ver { margin-left: 332.5px; display: flex; align-items: center; gap: 3px; color: #585d65; font-size: 14px; }
    .pill { box-sizing: border-box; height: 36px; margin-bottom: 1px; border-radius: 18px; background: #1f2f47; display: flex; align-items: center; font-size: 13px; font-weight: 500; padding-left: 4px; color: #85898f; flex: none; }
    .dot { height: 28px; border-radius: 14px; background: #121822; display: flex; align-items: center; justify-content: center; font-size: 14px; gap: 6px; }
    .d1 { width: 28px; }
    .d2 { width: 44px; }
    .lab { margin: 0 8px 0 9px; }
    .lab2 { margin-left: 7px; }
    .lab3 { margin-left: 9px; }
    .tour { margin-left: 23px; width: 135px; }
    .msgs { margin-left: 8px; width: 240px; }
    .user { margin-left: 211px; width: 124px; padding-left: 36px; }
    .tools { height: 67px; flex: none; background: #7f7f7f; display: flex; align-items: center; justify-content: flex-end; padding-right: 10px; box-sizing: border-box; border-bottom: 1px solid #74767b; }
    .help { box-sizing: border-box; height: 41px; width: 110px; border: 1px solid #5c6066; border-radius: 4px; display: flex; align-items: center; justify-content: flex-end; padding: 1px 16px 0 0; color: #26292d; }
    .note { margin: 32px 10px 0 20px; height: 200px; flex: none; background: #6d727a; border-radius: 3px; box-sizing: border-box; padding: 122px 22px 0 0; text-align: right; color: #1d2a40; }
    .filters { display: flex; justify-content: flex-end; gap: 8px; padding: 21px 10px 0 0; flex: none; }
    .sel { box-sizing: border-box; width: 200px; height: 42px; border: 1px solid #626976; border-radius: 4px; background: #7f7f7f; display: flex; align-items: center; overflow: hidden; color: #1d2023; }
    .sel.n { width: 93px; padding-left: 16px; }
    .sel .cv { margin-left: auto; width: 45px; height: 40px; background: #767980; display: flex; align-items: center; justify-content: center; color: #07090b; }
    .table { margin: 15px 10px 0 20px; height: 145px; flex: none; background: #7f7f7f; box-shadow: 0 2px 6px rgba(40, 45, 60, 0.15); }
    .th { height: 48px; border-bottom: 1px solid #6f7175; box-sizing: border-box; display: flex; align-items: center; justify-content: flex-end; padding-right: 90px; font-weight: 700; }
    .td { display: flex; justify-content: flex-end; align-items: center; padding: 13px 17px 0 0; gap: 12px; }
    .log { box-sizing: border-box; height: 42px; width: 150px; border: 1px solid #15181b; border-radius: 4px; display: flex; align-items: center; justify-content: flex-end; padding-right: 15.5px; gap: 4px; }
    .info { width: 31px; height: 29px; border-radius: 3px; background: #193e6f; display: flex; align-items: center; justify-content: center; margin-top: 9px; }
  `;
  render() {
    const cv = icon(13, 9, "0 0 13 9", line("M1.5 1.5L6.5 6.8L11.5 1.5", 2.4));
    const big = icon(16, 10, "0 0 16 10", line("M1.5 1.5L8 8L14.5 1.5", 2.2));
    return html`
      <div class="head">
        ${icon(12, 21, "0 0 12 21", svg`<g fill="none" stroke="currentColor" stroke-width="1.600"><path d="M1 4.500V9.200h3.500M1 5h2.500V3q0-2 2-2h3q2.700 0 2.700 3v6q0 3-2.700 3H6.500"/><path d="M6.500 4V19.500M3.500 20H9M8 4v9"/></g>`, "mark")}
        <h1>${t("Manage Backups", 148)}</h1>
        <div class="ver">${joomla(11)}${t("5.1.4", 27.5)}</div>
        <div class="pill tour"><span class="dot d1">${icon(16, 16, "0 0 16 16", svg`<path d="M7 0h2v1h5.500v4.500H1L0 3.200 1 1h6zM1.500 7H15l1 2.300-1 2.200H1.500zM7 12.500h2V16H7z" fill="currentColor"/>`)}</span><span class="lab">${t("Take a Tour", 62.5)}</span>${cv}</div>
        <div class="pill msgs"><span class="dot d2">${icon(15, 16, "0 0 15 16", svg`<path d="M7.500 0q1 0 1 1v.8c2.500.5 4 2.500 4 5 0 3 .7 4.300 2 5.500.6.700.2 1.500-.7 1.500H1.200c-.9 0-1.300-.8-.7-1.500 1.300-1.200 2-2.500 2-5.500 0-2.500 1.500-4.500 4-5V1q0-1 1-1zM5.500 14.500h4q-.3 1.500-2 1.500t-2-1.500z" fill="currentColor"/>`)}${t("2", 8.5)}</span><span class="lab2">${t("Post Installation Messages", 149)}</span></div>
        <div class="pill user">${t("User Menu", 59.5)}<span class="lab3">${cv}</span></div>
      </div>
      <div class="tools"><div class="help">${t("Help", 33)}</div></div>
      <div class="note">${t("out", 24)}</div>
      <div class="filters">
        <div class="sel"><span class="cv">${big}</span></div>
        <div class="sel n">${t("20", 19)}<span class="cv">${big}</span></div>
      </div>
      <div class="table">
        <div class="th">${t("& Download", 87)}</div>
        <div class="td">
          <div class="log">${icon(16, 16, "0 0 16 16", svg`<circle cx="6.500" cy="6.500" r="5.300" fill="none" stroke="currentColor" stroke-width="2.100"/><path d="M10.500 10.500L15 15" stroke="currentColor" stroke-width="2.500" stroke-linecap="round"/>`)}${t("View Log", 66.5)}</div>
          <div class="info">${icon(14, 14, "0 0 14 14", svg`<circle cx="7" cy="7" r="7" fill="#868d97"/><circle cx="7" cy="4" r="1" fill="#193e6f"/><path d="M5.600 6.300h1.700v3.800M5.400 10.100h3.400" fill="none" stroke="#193e6f" stroke-width="1.200"/>`)}</div>
        </div>
      </div>`;
  }
}

@customElement("downloads-flyout")
class DownloadsFlyout extends LitElement {
  static styles = css`
    :host { display: block; box-sizing: border-box; width: 362px; height: 319px; background: #fff; border-radius: 8px; border: 1px solid #d2d2d2; box-shadow: 0 8px 18px rgba(0, 0, 0, 0.35); font: 12.5px/18px "Noto Sans", sans-serif; color: #333; }
    .ic { display: block; flex: none; }
    .hd { display: flex; align-items: center; height: 36px; border-bottom: 1px solid #e3e3e3; padding: 0 18px 4px 16px; font-weight: 600; box-sizing: border-box; }
    .tools { margin-left: auto; display: flex; align-items: center; gap: 17px; margin-top: -1px; }
    .f { display: flex; padding: 8px 0 0 18px; gap: 10px; }
    .f .ic { margin-top: 9px; }
    .open { color: #0067b8; font-size: 11px; line-height: 14px; }
  `;
  render() {
    return html`
      <div class="hd">${t("Downloads", 71.5)}
        <div class="tools">
          ${icon(17, 15, "0 0 17 15", line("M.8 12V3q0-2 2-2h3l2 2h6.4q2 0 2 2v7q0 2-2 2H2.8q-2 0-2-2zM.8 5h5L7.8 3", 1.1))}
          ${icon(15, 15, "0 0 15 15", svg`<circle cx="6" cy="6" r="5.200" fill="none" stroke="currentColor" stroke-width="1.200"/>${line("M10 10l4.3 4.3", 1.2)}`)}
          ${icon(14, 4, "0 0 14 4", svg`<g fill="currentColor"><circle cx="1.500" cy="2" r="1.200"/><circle cx="7" cy="2" r="1.200"/><circle cx="12.500" cy="2" r="1.200"/></g>`)}
          ${icon(16, 16, "0 0 16 16", line("M10.3.8l4.9 4.9-1.5 1.2-3 1.2-2 4.7L3 7.2l4.8-2L9 2.2zM5.6 10.2L.8 15.2", 1.2))}
        </div>
      </div>
      <div class="f">
        ${icon(12, 15, "0 0 12 15", svg`<path d="M.6.6h7.900l2.900 2.900v10.900H.6z" fill="#fafafa" stroke="#a5a5a5"/><path d="M8.500.6v2.900h2.900" fill="none" stroke="#a5a5a5"/>`)}
        <div>${t("site-localhost-20240923-133823utc-Vb0QX6RAjOP6gd...", 299)}<div class="open">${t("Open file", 41.5)}</div></div>
      </div>`;
  }
}

@customElement("task-bar")
class TaskBar extends LitElement {
  static styles = css`
    :host { display: flex; height: 39px; background: linear-gradient(90deg, #21373f 0%, #22363f 30%, #1d2f42 65%, #1a2a48 100%); color: #fff; font: 11.5px/14px "Noto Sans", sans-serif; }
    .ic { display: block; flex: none; }
    .b { width: 48px; display: flex; align-items: center; justify-content: center; box-sizing: border-box; padding-top: 1px; }
    .start { width: 46px; }
    .find { width: 50px; }
    .views { width: 46px; padding-bottom: 3px; margin-right: 4px; }
    .mail { width: 50px; }
    .run { box-shadow: inset 0 -2px #76b9ed; width: 40px; margin: 0 4px; }
    .rec { margin-left: 4px; padding-left: 1px; }
    .on { background: #4d6068; box-shadow: inset 0 -2px #76b9ed; margin: 0 1px 0 1px; }
    .clock { margin-left: auto; width: 30px; overflow: hidden; padding-top: 21px; white-space: nowrap; }
  `;
  render() {
    return html`
      <div class="b start">${icon(16, 16, "0 0 16 16", svg`<path d="M0 2.400L6.500 1.500v6H0zM7.500 1.300L16 .2v7.300H7.500zM0 8.500h6.500v6L0 13.600zM7.500 8.500H16v7.300l-8.500-1.200z" fill="#fff"/>`)}</div>
      <div class="b find">${icon(22, 22, "0 0 22 22", svg`<circle cx="13" cy="9" r="7.800" fill="none" stroke="#fff" stroke-width="2"/><path d="M7.500 15L.8 21.500" stroke="#fff" stroke-width="2.200"/>`)}</div>
      <div class="b views">${icon(17, 16, "0 0 17 16", svg`<g fill="none" stroke="#fff" stroke-width="1.100"><rect x="1" y="4.500" width="10" height="7"/><path d="M1 .3V2.500h10V.3M1 15.700V13.500h10v2.200M14.800 0v4M14.800 9v7"/></g><rect x="13.300" y="5" width="3" height="3" fill="#fff"/>`)}</div>
      <div class="b run">
        <svg class="ic" width="24" height="24" viewBox="0 0 24 24">
          <defs>
            <linearGradient id="a" x1="0" y1="0" x2="1" y2=".3"><stop offset="0" stop-color="#2fa8e8"/><stop offset=".6" stop-color="#35c8b8"/><stop offset="1" stop-color="#6fe05a"/></linearGradient>
            <linearGradient id="b" x1="0" y1="0" x2=".6" y2="1"><stop offset="0" stop-color="#1a8fdd"/><stop offset="1" stop-color="#1173c9"/></linearGradient>
          </defs>
          <circle cx="12" cy="12" r="12" fill="url(#b)"/>
          <path d="M.4 10C1.500 4 6.500 0 12.200 0 19 0 24 5 24 10.500c0 3.700-2.800 6-6.200 6-2.600 0-4.300-.8-4.300-1.800 0-.7 1.300-1.200 1.300-3.300C14.800 8.700 12 6.400 8.300 6.400 4.800 6.400 1.900 8 .4 10z" fill="url(#a)"/>
          <path d="M8.500 13.500c0-2 1.100-3.700 2.800-4.600C8 9 5.500 11.500 5.500 15c0 4.500 3.700 8 8.500 8 3.600 0 6.800-2.200 8.500-5.300-1.500.8-3.300 1.200-5 1.200-5 0-9-2.200-9-5.400z" fill="#0c4f9c"/>
        </svg>
      </div>
      <div class="b on">${icon(22, 19, "0 0 22 19", svg`<path d="M0 1q0-1 1-1h7l2 2.500h12V18H0z" fill="#e0a11b"/><path d="M0 4h22v14H0z" fill="#fcd462"/><path d="M4.500 19v-7q0-2 2-2h9q2 0 2 2v7h-3.500v-4.500H8V19z" fill="#3d94d8"/>`)}</div>
      <div class="b">${icon(24, 23, "0 0 24 23", svg`<path d="M6 6V2.500Q6 1 7.500 1h9Q18 1 18 2.500V6" fill="none" stroke="#2fa9e6" stroke-width="2"/><path d="M.5 5h23v14q0 4-4 4h-15q-4 0-4-4z" fill="#f1f1f1"/><path d="M7.300 9.300h4.200v4.200H7.300z" fill="#e2532c"/><path d="M12.500 9.300h4.200v4.200h-4.200z" fill="#7eb728"/><path d="M7.300 14.500h4.200v4.200H7.300z" fill="#1c9fe0"/><path d="M12.500 14.500h4.200v4.200h-4.200z" fill="#f6b80f"/>`)}</div>
      <div class="b mail">${icon(24, 22, "0 0 24 22", svg`<path d="M0 6.500L12 0l12 6.500V10L12 16 0 10z" fill="#0c59a4"/><path d="M2.500 6.500h19V12l-9.500 5-9.500-5z" fill="#f3f3f3"/><path d="M0 7l24 15H0z" fill="#2da4e6"/><path d="M24 7L0 22h24z" fill="#3fbaf2"/><path d="M0 22L12 14.500 24 22z" fill="#2aa2e2"/>`)}</div>
      <div class="b run rec">${icon(26, 24, "0 0 26 24", svg`<rect x=".8" y="2" width="22" height="12" fill="#f3f3f3" stroke="#9c8d8d" stroke-width="1.400"/><path d="M9.500 5v5M13.500 5v5" stroke="#666" stroke-dasharray="1.500 1"/><path d="M7 17.500h8M11 14v3" stroke="#9c8d8d" stroke-width="1.400"/><circle cx="18" cy="17" r="7.800" fill="#a42622"/>`)}</div>
      <div class="clock">${t("9/23/2024", 53)}</div>`;
  }
}

const captionLines: Array<Array<[string, number]>> = [
  [["Now, ", 144.3], ["navigate ", 233.8], ["to ", 68.8], ["your ", 128.8], ["www ", 138.3], ["directory", 227]],
  [["from ", 136.8], ["wamp ", 167.8], ["manager", 225.5]],
];

@customElement("app-root")
class AppRoot extends LitElement {
  static styles = css`
    :host { display: flex; flex-direction: column; position: relative; width: 1596px; height: 896px; overflow: hidden; background: #f3f3f3; }
    .page { display: flex; height: 780px; margin: 0 0 4px 3px; border-radius: 8px 0 0 8px; overflow: hidden; }
    .fly { position: absolute; left: 1184px; top: 68px; }
    .win { position: absolute; left: 285px; top: 138px; }
    .note { position: absolute; left: 463.5px; top: 483px; font: 54px/75px "Noto Sans", sans-serif; color: #fb0505; display: grid; }
    .note div { display: flex; }
    .tray { position: absolute; left: 1488px; top: 851px; display: block; }
    .tip { position: absolute; left: 1523px; top: 854px; width: 80px; height: 18px; box-sizing: border-box; border: 1px solid #777; background: #fff; color: #555; font: 11.5px/16px "Noto Sans", sans-serif; padding-left: 6px; }
    .cursor { position: absolute; left: 1510px; top: 860px; display: block; }
    .mark { position: absolute; left: 1475px; top: 838px; width: 78px; height: 58px; box-sizing: border-box; border: solid #fe0000; border-width: 13px 13px 13px 12.5px; }
  `;
  render() {
    return html`
      <browser-chrome></browser-chrome>
      <div class="page"><joomla-sidebar></joomla-sidebar><joomla-main></joomla-main></div>
      <task-bar></task-bar>
      <downloads-flyout class="fly"></downloads-flyout>
      <explorer-window class="win"></explorer-window>
      <div class="note">${captionLines.map((words) => html`<div>${words.map(([word, w]) => t(word, w))}</div>`)}</div>
      <svg class="tray" width="72" height="36" viewBox="0 0 72 36">
        <rect x="25" y="7" width="25" height="29" fill="#3d4b63"/>
        <path d="M6.500 28.500L12 22.500l5.500 6" fill="none" stroke="#fff" stroke-width="1.500"/>
        <path d="M64 29h4v-7" fill="none" stroke="#fff" stroke-width="1.200"/>
      </svg>
      <svg class="cursor" width="26" height="26" viewBox="0 0 26 26">
        <circle cx="13" cy="13" r="12" fill="#d3cf45" opacity=".9"/>
        <rect x="7" y="10" width="11" height="10" rx="1.500" fill="#a4d32c" stroke="#5cb515" stroke-width="1.400"/><path d="M12 12v8" stroke="#5cb515" stroke-width="1.500"/>
      </svg>
      <div class="tip">${t("All services running", 103)}</div>
      <svg class="cursor" width="26" height="26" viewBox="0 0 26 26"><path d="M13 13.500v9.500h9.500z" fill="#fffbd0" stroke="#6b6b20" stroke-width=".6"/></svg>
      <div class="mark"></div>`;
  }
}
